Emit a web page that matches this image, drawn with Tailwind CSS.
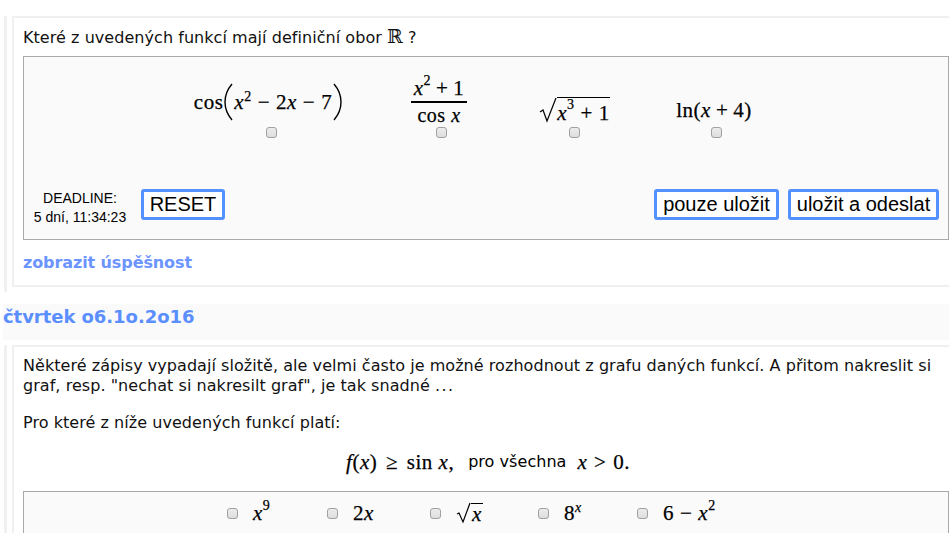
<!DOCTYPE html>
<html lang="cs">
<head>
<meta charset="utf-8">
<script src="https://cdn.jsdelivr.net/npm/@tailwindcss/browser@4"></script>
</head>
<body class="bg-white">
<div class="h-[533px] w-[949px] overflow-hidden text-[#111] font-['DejaVu_Sans',sans-serif] text-[16px] leading-[20px]">
  <div class="pt-[11px]">
    <div class="ml-[4px] border-l-[3px] border-[#f0f0f0] pl-[5px] pb-[5px]">
      <div class="mt-[5px] border-t-2 border-b-2 border-l-2 border-[#f0f0f0] border-r-0 h-[271px] pl-[9px] pt-[8px] -mr-[2px]">
        <p class="h-[30px] whitespace-nowrap tracking-[0.05px]">Které z uvedených funkcí mají definiční obor <span class="font-['DejaVu_Serif',serif] text-[19px]">ℝ</span> ?</p>
        <div class="h-[184px] w-[926px] border border-[#a9a9a9] bg-[#fafafa] flex flex-col font-['Liberation_Serif',serif] text-[#000]">
          <div class="flex h-[85px] pt-[24px] pl-[173px] text-[21px] tracking-[0.5px] [-webkit-text-stroke:0.25px_#000]">
            <div class="w-[148px] flex flex-col items-center">
              <div class="h-[45px] pb-[3px] mr-[5px] flex items-center whitespace-nowrap">
                <span>cos</span>
                <svg class="mx-[1px]" width="9" height="38" viewBox="0 0 9 38"><path d="M8 1C2 8 1 14 1 19s1 11 7 18" fill="none" stroke="#000" stroke-width="1.4"/></svg>
                <i>x</i><sup class="text-[14px] -mt-[8px] relative -top-[1px]">2</sup><span class="mx-[6px]">−</span><span>2</span><i>x</i><span class="mx-[6px]">−</span><span>7</span>
                <svg class="mx-[1px]" width="9" height="38" viewBox="0 0 9 38"><path d="M1 1c6 7 7 13 7 18s-1 11-7 18" fill="none" stroke="#000" stroke-width="1.4"/></svg>
              </div>
              <input type="checkbox" class="appearance-none block mt-[1px] size-[11px] rounded-[3px] border border-[#a0a0a0] bg-linear-to-b from-[#ececec] to-[#dedede]">
            </div>
            <div class="ml-[68px] w-[56px] flex flex-col items-center">
              <div class="h-[48px] -mt-[3px] mr-[4px] flex flex-col items-center whitespace-nowrap leading-[20px]">
                <span class="h-[25px] border-b-2 border-black w-[56px] flex justify-center"><i>x</i><sup class="text-[14px] relative top-[3px]">2</sup><span class="mx-[5px]">+</span>1</span>
                <span class="text-[20px] mt-[2px]">cos <i>x</i></span>
              </div>
              <input type="checkbox" class="appearance-none block mt-[1px] size-[11px] rounded-[3px] border border-[#a0a0a0] bg-linear-to-b from-[#ececec] to-[#dedede]">
            </div>
            <div class="ml-[69px] w-[73px] flex flex-col items-center">
              <div class="h-[45px] flex items-end whitespace-nowrap pb-[3px]">
                <svg width="18" height="26" viewBox="0 0 18 26"><path d="M1 15l3-2 4 11 9-23" fill="none" stroke="#000" stroke-width="1.2"/></svg>
                <span class="border-t border-black h-[26px] flex pt-[3px] leading-[24px]"><i>x</i><sup class="text-[14px] relative top-[4px]">3</sup><span class="mx-[6px]">+</span>1</span>
              </div>
              <input type="checkbox" class="appearance-none block mt-[1px] size-[11px] rounded-[3px] border border-[#a0a0a0] bg-linear-to-b from-[#ececec] to-[#dedede]">
            </div>
            <div class="ml-[67px] w-[77px] flex flex-col items-center">
              <div class="h-[45px] pt-[13px] mr-[5px] flex items-center whitespace-nowrap">ln(<i>x</i><span class="mx-[5px]">+</span>4)</div>
              <input type="checkbox" class="appearance-none block mt-[1px] size-[11px] rounded-[3px] border border-[#a0a0a0] bg-linear-to-b from-[#ececec] to-[#dedede]">
            </div>
          </div>
          <div class="flex items-start pt-[47px] font-['Liberation_Sans',sans-serif]">
            <div class="w-[117px] pr-[5px] text-center text-[14px] leading-[19px] whitespace-nowrap">DEADLINE:<br>5 dní, 11:34:23</div>
            <button class="h-[31px] w-[84px] pb-[2px] border-[3px] border-[#5291ff] rounded-[3px] bg-white text-[20px] leading-none">RESET</button>
            <div class="ml-auto mr-[9px] flex gap-[9px]">
              <button class="h-[31px] w-[125px] pb-[2px] border-[3px] border-[#5291ff] rounded-[3px] bg-white text-[20px] leading-none">pouze uložit</button>
              <button class="h-[31px] w-[151px] pb-[2px] border-[3px] border-[#5291ff] rounded-[3px] bg-white text-[20px] leading-none">uložit a odeslat</button>
            </div>
          </div>
        </div>
        <a class="block mt-[13px] font-bold text-[#6c94ff] tracking-[-0.1px]">zobrazit úspěšnost</a>
      </div>
    </div>
    <div class="ml-[3px] mt-[12px] h-[36px] bg-[#fafafa] pt-[1px] font-bold text-[#5b8fff] text-[18px] leading-[24px] tracking-[-0.05px]">čtvrtek o6.1o.2o16</div>
    <div class="ml-[4px] mt-[5px] border-l-[3px] border-[#f0f0f0] pl-[5px]">
      <div class="border-t-2 border-l-2 border-[#f0f0f0] pl-[9px] pt-[9px] tracking-[0.05px]">
        <p class="w-[920px]">Některé zápisy vypadají složitě, ale velmi často je možné rozhodnout z grafu daných funkcí. A přitom nakreslit si graf, resp. "nechat si nakresilt graf", je tak snadné <span class="tracking-[1.4px]">...</span></p>
        <p class="mt-[17px]">Pro které z níže uvedených funkcí platí:</p>
        <div class="h-[42px] mt-[8px] flex items-center justify-center whitespace-nowrap font-['Liberation_Serif',serif] text-[#000] text-[21px] pl-[4px]">
          <span class="tracking-[0.5px] [-webkit-text-stroke:0.25px_#000]"><i>f</i>(<i>x</i>)<span class="mx-[3px]"> ≥ </span>sin <i>x</i>,</span><span class="font-['DejaVu_Sans',sans-serif] text-[16px] ml-[14px] mr-[11px]">pro všechna</span><span class="tracking-[0.5px] [-webkit-text-stroke:0.25px_#000]"><i>x</i><span class="mx-[1px]">&nbsp;&gt;&nbsp;</span>0.</span>
        </div>
        <div class="mt-[8px] h-[60px] w-[926px] border border-[#a9a9a9] bg-[#fafafa] flex items-start pt-[8px] pl-[203px] font-['Liberation_Serif',serif] text-[#000] text-[21px] tracking-[0.5px] [-webkit-text-stroke:0.25px_#000]">
          <div class="flex items-center h-[26px]">
            <input type="checkbox" class="appearance-none block size-[11px] rounded-[3px] border border-[#a0a0a0] bg-linear-to-b from-[#ececec] to-[#dedede]">
            <span class="ml-[15px] w-[74px] flex"><i>x</i><sup class="text-[14px] relative top-[3px]">9</sup></span>
            <input type="checkbox" class="appearance-none block size-[11px] rounded-[3px] border border-[#a0a0a0] bg-linear-to-b from-[#ececec] to-[#dedede]">
            <span class="ml-[15px] w-[77px]">2<i>x</i></span>
            <input type="checkbox" class="appearance-none block size-[11px] rounded-[3px] border border-[#a0a0a0] bg-linear-to-b from-[#ececec] to-[#dedede]">
            <span class="ml-[15px] w-[82px] flex items-end"><svg width="15" height="22" viewBox="0 0 15 22"><path d="M1 12l2-1 4 9 7-19" fill="none" stroke="#000" stroke-width="1.2"/></svg><i class="border-t border-black leading-[20px] px-[1px]">x</i></span>
            <input type="checkbox" class="appearance-none block size-[11px] rounded-[3px] border border-[#a0a0a0] bg-linear-to-b from-[#ececec] to-[#dedede]">
            <span class="ml-[15px] w-[73px] flex">8<i class="text-[14px] relative top-[-2px] leading-[13px]">x</i></span>
            <input type="checkbox" class="appearance-none block size-[11px] rounded-[3px] border border-[#a0a0a0] bg-linear-to-b from-[#ececec] to-[#dedede]">
            <span class="ml-[15px] flex">6<span class="mx-[6px]">−</span><i>x</i><sup class="text-[14px] relative top-[3px]">2</sup></span>
          </div>
        </div>
      </div>
    </div>
  </div>
</div>
</body>
</html>
